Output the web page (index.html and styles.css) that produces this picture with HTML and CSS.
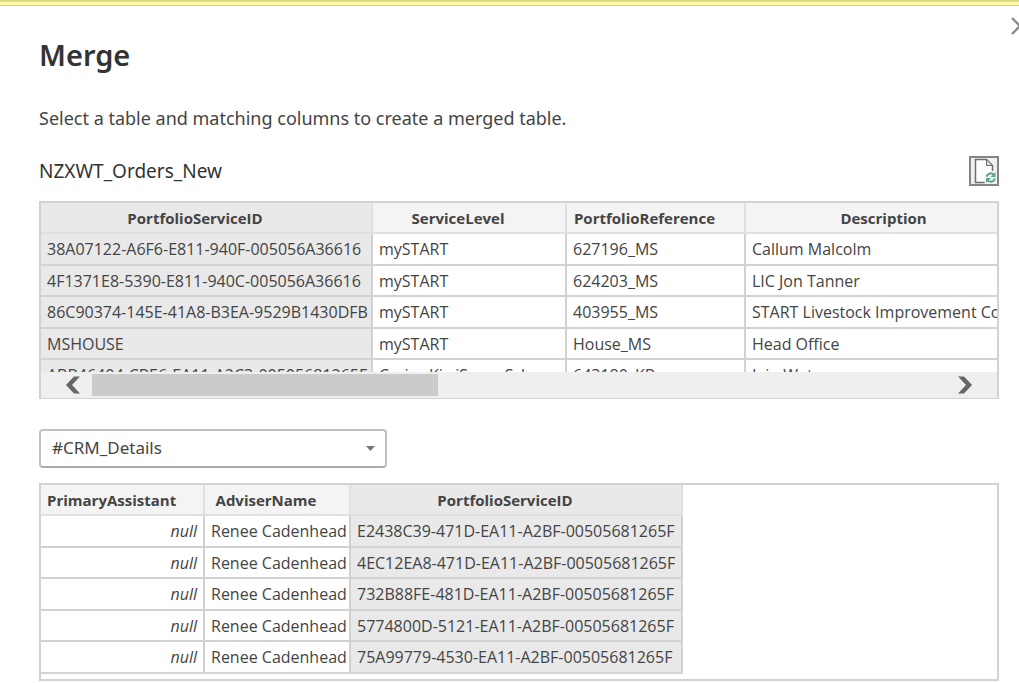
FILE: index.html
```
<!DOCTYPE html>
<html lang="en">
<head>
<meta charset="utf-8">
<title>Merge</title>
<link rel="stylesheet" href="styles.css">
</head>
<body>
<div class="notice-strip"></div>
<main class="dialog">
  <button class="close" type="button" aria-label="Close">
    <svg width="16" height="18" viewBox="0 0 16 18"><path d="M1 1l8 8-8 8M17 1l-8 8 8 8" fill="none" stroke="#8a8a8a" stroke-width="2.400"/></svg>
  </button>
  <h1 class="title">Merge</h1>
  <p class="intro">Select a table and matching columns to create a merged table.</p>

  <div class="source">
    <h2 class="source-name">NZXWT_Orders_New</h2>
    <button class="refresh" type="button" aria-label="Refresh preview">
      <svg width="26" height="26" viewBox="0 0 26 26">
        <path d="M4.500 1.500H16L21.500 7V24.500H4.500Z" fill="#fff"/>
        <path d="M13 25V18L16 14.500H25V25Z" fill="#f1f1f1"/>
        <path d="M13.500 24.500H4.500V1.500H15.500L21.500 7.500V13" fill="none" stroke="#6e6e6e" stroke-width="1.500"/>
        <path d="M15.500 1.500V7.500H21.500Z" fill="#d8d8d8" stroke="#6e6e6e"/>
        <path d="M15.500 18.500C17 14.800 21 14.500 23 17M24 20.500C22.500 24.500 18.500 24.500 16.500 22" fill="none" stroke="#5fa58e" stroke-width="2"/>
        <path d="M24.500 14V19H19.500ZM15 25V20H20Z" fill="#5fa58e"/>
      </svg>
    </button>
  </div>

  <section class="preview preview-orders">
    <div class="viewport">
      <table class="grid grid-fill">
        <colgroup><col class="w-id"><col class="w-level"><col class="w-ref"><col></colgroup>
        <thead><tr><th class="picked">PortfolioServiceID</th><th>ServiceLevel</th><th>PortfolioReference</th><th class="wide">Description</th></tr></thead>
        <tbody>
          <tr><td class="picked">38A07122-A6F6-E811-940F-005056A36616</td><td>mySTART</td><td>627196_MS</td><td>Callum Malcolm</td></tr>
          <tr><td class="picked">4F1371E8-5390-E811-940C-005056A36616</td><td>mySTART</td><td>624203_MS</td><td>LIC Jon Tanner</td></tr>
          <tr><td class="picked">86C90374-145E-41A8-B3EA-9529B1430DFB</td><td>mySTART</td><td>403955_MS</td><td>START Livestock Improvement Co</td></tr>
          <tr><td class="picked">MSHOUSE</td><td>mySTART</td><td>House_MS</td><td>Head Office</td></tr>
          <tr><td class="picked">ABB46404-CBE6-EA11-A2C3-00505681265F</td><td>Craigs KiwiSaver Scheme</td><td>643180_KB</td><td>Iain Watson</td></tr>
        </tbody>
      </table>
    </div>
    <div class="scrollbar">
      <button class="arrow" type="button" aria-label="Scroll left"><svg width="14" height="18" viewBox="0 0 14 18"><path d="M8 0.500H14L6 9L14 17.500H8L0 9Z" fill="#666"/></svg></button>
      <div class="track"><div class="thumb"></div></div>
      <button class="arrow" type="button" aria-label="Scroll right"><svg width="14" height="18" viewBox="0 0 14 18"><path d="M6 0.500H0L8 9L0 17.500H6L14 9Z" fill="#666"/></svg></button>
    </div>
  </section>

  <div class="picker">
    <select class="picker-select" aria-label="Table to merge"><option>#CRM_Details</option></select>
    <svg class="picker-caret" width="9" height="5" viewBox="0 0 9 5"><path d="M0 0H9L4.500 5Z" fill="#777"/></svg>
  </div>

  <section class="preview preview-crm">
    <table class="grid">
      <colgroup><col class="w-assistant"><col class="w-adviser"><col class="w-id"></colgroup>
      <thead><tr><th>PrimaryAssistant</th><th>AdviserName</th><th class="picked">PortfolioServiceID</th></tr></thead>
      <tbody>
        <tr><td class="null">null</td><td>Renee Cadenhead</td><td class="picked">E2438C39-471D-EA11-A2BF-00505681265F</td></tr>
        <tr><td class="null">null</td><td>Renee Cadenhead</td><td class="picked">4EC12EA8-471D-EA11-A2BF-00505681265F</td></tr>
        <tr><td class="null">null</td><td>Renee Cadenhead</td><td class="picked">732B88FE-481D-EA11-A2BF-00505681265F</td></tr>
        <tr><td class="null">null</td><td>Renee Cadenhead</td><td class="picked">5774800D-5121-EA11-A2BF-00505681265F</td></tr>
        <tr><td class="null">null</td><td>Renee Cadenhead</td><td class="picked">75A99779-4530-EA11-A2BF-00505681265F</td></tr>
      </tbody>
    </table>
  </section>
</main>
</body>
</html>
```
FILE: styles.css
```
* { box-sizing: border-box; }

body {
  margin: 0;
  background: #fff;
  color: #444;
  font-family: "Noto Sans", "Open Sans", sans-serif;
  overflow: hidden;
}

button { padding: 0; border: 0; background: none; }
svg { display: block; }

.notice-strip {
  height: 6px;
  border-top: 2px solid #dcdc86;
  border-bottom: 1px solid #c8c8c8;
  background: #fffaa8;
}

.dialog {
  position: relative;
  padding: 29px 20px 0 39px;
}

.close {
  position: absolute;
  top: 11px;
  right: -8px;
}

.title {
  margin: 0;
  color: #333;
  font-size: 29px;
  font-weight: 600;
  line-height: 40px;
}

.intro {
  margin: 29px 0 0;
  font-size: 18px;
  line-height: 28px;
}

.source {
  display: flex;
  justify-content: space-between;
  align-items: center;
  margin-top: 24px;
}

.source-name {
  margin: 0;
  color: #333;
  font-size: 19px;
  font-weight: 400;
  line-height: 30px;
}

.refresh {
  border: 2px solid #858585;
  background: #f1f1f1;
}

.preview { border: 2px solid #d2d2d2; }

.preview-orders {
  margin-top: 15px;
  border-bottom-width: 1px;
}

.viewport {
  height: 169px;
  overflow: hidden;
}

.preview-crm {
  margin-top: 15px;
  padding-bottom: 5px;
}

.grid {
  width: 642px;
  table-layout: fixed;
  border-collapse: separate;
  border-spacing: 0;
  font-family: "Open Sans", "Noto Sans", sans-serif;
  font-size: 16px;
  line-height: 24px;
}

.grid-fill { width: 100%; }
.w-id { width: 332px; }
.w-level { width: 194px; }
.w-ref { width: 179px; }
.w-assistant { width: 164px; }
.w-adviser { width: 146px; }

.grid th,
.grid td {
  height: 31px;
  padding: 0 6px;
  border: solid #d2d2d2;
  border-width: 0 2px 2px 0;
  overflow: hidden;
  white-space: nowrap;
  text-align: left;
}

.grid tbody tr:nth-child(odd) td { height: 32px; }
.grid-fill th:last-child,
.grid-fill td:last-child { border-right: 0; }

.grid th {
  padding-right: 28px;
  border-color: #e0e0e0;
  background: #f4f4f4;
  font-size: 15px;
  font-weight: 700;
  text-align: center;
}

.grid th.wide { padding: 0 6px 0 30px; }
.grid .picked { background: #e9e9e9; }
.grid td.null { font-style: italic; text-align: right; }

.scrollbar {
  display: flex;
  align-items: center;
  height: 26px;
  padding: 0 25px;
  background: #efefef;
}

.track {
  flex: 1;
  height: 22px;
  margin: 0 12px;
}

.thumb {
  width: 346px;
  height: 100%;
  background: #cbcbcb;
}

.picker {
  position: relative;
  width: 348px;
  margin-top: 30px;
}

.picker-select {
  display: block;
  width: 100%;
  height: 39px;
  padding: 0 11px 2px;
  border: 2px solid #c0c0c0;
  border-bottom-color: #aaa;
  border-radius: 4px;
  background: #fff;
  color: #444;
  font: 17px "Noto Sans", "Open Sans", sans-serif;
  appearance: none;
}

.picker-caret {
  position: absolute;
  top: 17px;
  right: 12px;
  pointer-events: none;
}
```
